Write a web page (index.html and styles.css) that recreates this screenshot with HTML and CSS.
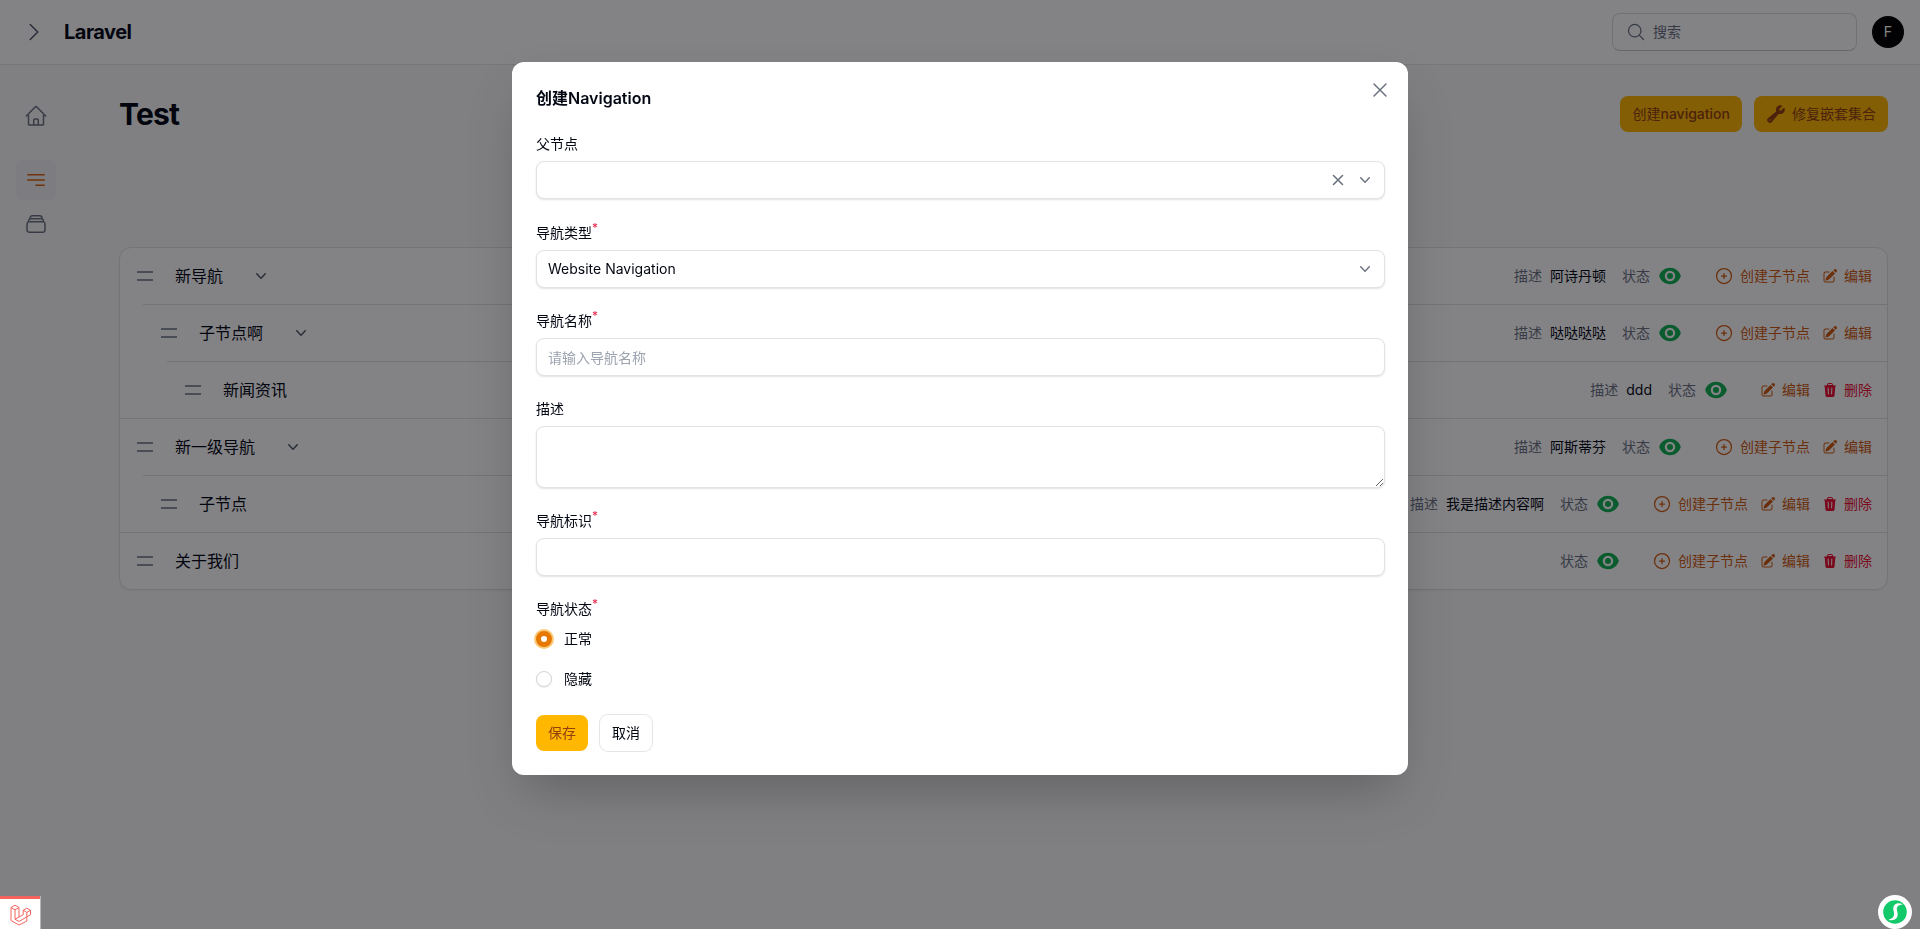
FILE: index.html
```html
<!DOCTYPE html>
<html lang="zh-CN">
<head>
<meta charset="utf-8">
<title>Test - Laravel</title>
<link rel="stylesheet" href="styles.css">
</head>
<body>
<svg class="defs" width="0" height="0" aria-hidden="true">
  <symbol id="i-eye" viewBox="0 0 24 24"><path d="M12 15a3 3 0 1 0 0-6 3 3 0 0 0 0 6Z"/><path fill-rule="evenodd" clip-rule="evenodd" d="M1.323 11.447C2.811 6.976 7.028 3.75 12.001 3.75c4.97 0 9.185 3.223 10.675 7.69.12.362.12.752 0 1.113-1.487 4.471-5.705 7.697-10.677 7.697-4.97 0-9.186-3.223-10.675-7.69a1.762 1.762 0 0 1 0-1.113ZM17.25 12a5.25 5.25 0 1 1-10.5 0 5.25 5.25 0 0 1 10.5 0Z"/></symbol>
  <symbol id="i-plus" viewBox="0 0 24 24"><path fill="none" stroke="currentColor" stroke-width="1.5" stroke-linecap="round" stroke-linejoin="round" d="M12 9v6m3-3H9m12 0a9 9 0 1 1-18 0 9 9 0 0 1 18 0Z"/></symbol>
  <symbol id="i-edit" viewBox="0 0 24 24"><path d="M21.731 2.269a2.625 2.625 0 0 0-3.712 0l-1.157 1.157 3.712 3.712 1.157-1.157a2.625 2.625 0 0 0 0-3.712ZM19.513 8.199l-3.712-3.712-8.4 8.4a5.25 5.25 0 0 0-1.32 2.214l-.8 2.685a.75.75 0 0 0 .933.933l2.685-.8a5.25 5.25 0 0 0 2.214-1.32l8.4-8.4Z"/><path d="M5.25 5.25a3 3 0 0 0-3 3v10.5a3 3 0 0 0 3 3h10.5a3 3 0 0 0 3-3V13.5a.75.75 0 0 0-1.5 0v5.25a1.5 1.5 0 0 1-1.5 1.5H5.25a1.5 1.5 0 0 1-1.5-1.5V8.25a1.5 1.5 0 0 1 1.5-1.5h5.25a.75.75 0 0 0 0-1.5H5.25Z"/></symbol>
  <symbol id="i-trash" viewBox="0 0 24 24"><path fill-rule="evenodd" clip-rule="evenodd" d="M16.5 4.478v.227a48.816 48.816 0 0 1 3.878.512.75.75 0 1 1-.256 1.478l-.209-.035-1.005 13.07a3 3 0 0 1-2.991 2.77H8.084a3 3 0 0 1-2.991-2.77L4.087 6.66l-.209.035a.75.75 0 0 1-.256-1.478A48.567 48.567 0 0 1 7.5 4.705v-.227c0-1.564 1.213-2.9 2.816-2.951a52.662 52.662 0 0 1 3.369 0c1.603.051 2.815 1.387 2.815 2.951Zm-6.136-1.452a51.196 51.196 0 0 1 3.273 0C14.39 3.05 15 3.684 15 4.478v.113a49.488 49.488 0 0 0-6 0v-.113c0-.794.609-1.428 1.364-1.452Zm-.355 5.945a.75.75 0 1 0-1.5.058l.347 9a.75.75 0 1 0 1.499-.058l-.346-9Zm5.48.058a.75.75 0 1 0-1.498-.058l-.347 9a.75.75 0 0 0 1.5.058l.345-9Z"/></symbol>
  <symbol id="i-handle" viewBox="0 0 16 10"><path fill="none" stroke="currentColor" stroke-width="1.5" d="M0 1h16M0 9h16"/></symbol>
  <symbol id="i-down" viewBox="0 0 20 20"><path fill-rule="evenodd" clip-rule="evenodd" d="M5.23 7.21a.75.75 0 0 1 1.06.02L10 11.168l3.71-3.938a.75.75 0 1 1 1.08 1.04l-4.25 4.5a.75.75 0 0 1-1.08 0l-4.25-4.5a.75.75 0 0 1 .02-1.06Z"/></symbol>
  <symbol id="i-x" viewBox="0 0 24 24"><path fill="none" stroke="currentColor" stroke-width="1.5" stroke-linecap="round" stroke-linejoin="round" d="M6 18 18 6M6 6l12 12"/></symbol>
  <symbol id="i-x-bold" viewBox="0 0 20 20"><path fill="none" stroke="currentColor" stroke-width="1.6" stroke-linecap="round" d="M5.5 14.500l9-9M5.5 5.500l9 9"/></symbol>
</svg>

<header class="topbar">
  <svg class="topbar-toggle" viewBox="0 0 24 24"><path fill="none" stroke="currentColor" stroke-width="1.5" stroke-linecap="round" stroke-linejoin="round" d="m8.25 4.5 7.5 7.5-7.5 7.5"/></svg>
  <div class="brand">Laravel</div>
  <div class="topbar-right">
    <label class="search">
      <svg class="search-icon" viewBox="0 0 24 24"><path fill="none" stroke="currentColor" stroke-width="1.5" stroke-linecap="round" stroke-linejoin="round" d="m21 21-5.197-5.197m0 0A7.5 7.5 0 1 0 5.196 5.196a7.5 7.5 0 0 0 10.607 10.607Z"/></svg>
      <span class="search-text">搜索</span>
    </label>
    <div class="avatar">F</div>
  </div>
</header>

<div class="shell">
  <nav class="sidebar">
    <a class="nav-item nav-item-first"><svg viewBox="0 0 24 24"><path fill="none" stroke="currentColor" stroke-width="1.5" stroke-linecap="round" stroke-linejoin="round" d="m2.25 12 8.954-8.955c.44-.439 1.152-.439 1.591 0L21.75 12M4.5 9.75v10.125c0 .621.504 1.125 1.125 1.125H9.75v-4.875c0-.621.504-1.125 1.125-1.125h2.25c.621 0 1.125.504 1.125 1.125V21h4.125c.621 0 1.125-.504 1.125-1.125V9.75M8.25 21h8.25"/></svg></a>
    <a class="nav-item nav-item-active"><svg viewBox="0 0 24 24"><path fill="none" stroke="currentColor" stroke-width="1.5" stroke-linecap="round" stroke-linejoin="round" d="M3.75 6.75h16.5M3.75 12h16.5M12 17.25h8.25"/></svg></a>
    <a class="nav-item"><svg viewBox="0 0 24 24"><path fill="none" stroke="currentColor" stroke-width="1.5" stroke-linecap="round" stroke-linejoin="round" d="M6 6.878V6a2.25 2.25 0 0 1 2.25-2.25h7.5A2.25 2.25 0 0 1 18 6v.878m-12 0c.235-.083.487-.128.75-.128h10.5c.263 0 .515.045.75.128m-12 0A2.25 2.25 0 0 0 4.5 9v.878m13.5-3A2.25 2.25 0 0 1 19.5 9v.878m0 0a2.246 2.246 0 0 0-.75-.128H5.25c-.263 0-.515.045-.75.128m15 0A2.25 2.25 0 0 1 21 12v6a2.25 2.25 0 0 1-2.25 2.25H5.25A2.25 2.25 0 0 1 3 18v-6c0-.98.626-1.813 1.5-2.122"/></svg></a>
  </nav>

  <main class="main">
    <div class="page-head">
      <h1 class="page-title">Test</h1>
      <div class="page-actions">
        <button class="btn btn-primary"><span>创建<span class="btn-latin">navigation</span></span></button>
        <button class="btn btn-primary btn-icon"><svg viewBox="0 0 24 24" fill="currentColor"><path fill-rule="evenodd" clip-rule="evenodd" d="M12 6.75a5.25 5.25 0 0 1 6.775-5.025.75.75 0 0 1 .313 1.248l-3.32 3.319c.063.475.276.934.641 1.299.365.365.824.578 1.3.64l3.318-3.319a.75.75 0 0 1 1.248.313 5.25 5.25 0 0 1-5.472 6.756c-1.018-.086-1.87.1-2.309.634L7.344 21.3A3.298 3.298 0 1 1 2.7 16.657l8.684-7.151c.533-.44.72-1.291.634-2.309A5.342 5.342 0 0 1 12 6.75ZM4.117 19.125a.75.75 0 0 1 .75-.75h.008a.75.75 0 0 1 .75.75v.008a.75.75 0 0 1-.75.75h-.008a.75.75 0 0 1-.75-.75v-.008Z"/></svg>修复嵌套集合</button>
      </div>
    </div>

    <section class="tree">
      <div class="row">
        <div class="row-left"><svg class="handle"><use href="#i-handle"/></svg><span class="row-name">新导航</span><svg class="row-toggle"><use href="#i-down"/></svg></div>
        <div class="row-right">
          <span class="meta-label">描述</span><span class="meta-value">阿诗丹顿</span>
          <span class="meta-label meta-status">状态</span><svg class="eye"><use href="#i-eye"/></svg>
          <a class="act act-first"><svg class="act-plus"><use href="#i-plus"/></svg>创建子节点</a>
          <a class="act"><svg class="act-icon"><use href="#i-edit"/></svg>编辑</a>
        </div>
      </div>
      <div class="row row-l1">
        <div class="row-left"><svg class="handle"><use href="#i-handle"/></svg><span class="row-name">子节点啊</span><svg class="row-toggle"><use href="#i-down"/></svg></div>
        <div class="row-right">
          <span class="meta-label">描述</span><span class="meta-value">哒哒哒哒</span>
          <span class="meta-label meta-status">状态</span><svg class="eye"><use href="#i-eye"/></svg>
          <a class="act act-first"><svg class="act-plus"><use href="#i-plus"/></svg>创建子节点</a>
          <a class="act"><svg class="act-icon"><use href="#i-edit"/></svg>编辑</a>
        </div>
      </div>
      <div class="row row-l2">
        <div class="row-left"><svg class="handle"><use href="#i-handle"/></svg><span class="row-name">新闻资讯</span></div>
        <div class="row-right">
          <span class="meta-label">描述</span><span class="meta-value">ddd</span>
          <span class="meta-label meta-status">状态</span><svg class="eye"><use href="#i-eye"/></svg>
          <a class="act act-first"><svg class="act-icon"><use href="#i-edit"/></svg>编辑</a>
          <a class="act act-danger"><svg class="act-icon"><use href="#i-trash"/></svg>删除</a>
        </div>
      </div>
      <div class="row">
        <div class="row-left"><svg class="handle"><use href="#i-handle"/></svg><span class="row-name">新一级导航</span><svg class="row-toggle"><use href="#i-down"/></svg></div>
        <div class="row-right">
          <span class="meta-label">描述</span><span class="meta-value">阿斯蒂芬</span>
          <span class="meta-label meta-status">状态</span><svg class="eye"><use href="#i-eye"/></svg>
          <a class="act act-first"><svg class="act-plus"><use href="#i-plus"/></svg>创建子节点</a>
          <a class="act"><svg class="act-icon"><use href="#i-edit"/></svg>编辑</a>
        </div>
      </div>
      <div class="row row-l1">
        <div class="row-left"><svg class="handle"><use href="#i-handle"/></svg><span class="row-name">子节点</span></div>
        <div class="row-right">
          <span class="meta-label">描述</span><span class="meta-value">我是描述内容啊</span>
          <span class="meta-label meta-status">状态</span><svg class="eye"><use href="#i-eye"/></svg>
          <a class="act act-first"><svg class="act-plus"><use href="#i-plus"/></svg>创建子节点</a>
          <a class="act"><svg class="act-icon"><use href="#i-edit"/></svg>编辑</a>
          <a class="act act-danger"><svg class="act-icon"><use href="#i-trash"/></svg>删除</a>
        </div>
      </div>
      <div class="row">
        <div class="row-left"><svg class="handle"><use href="#i-handle"/></svg><span class="row-name">关于我们</span></div>
        <div class="row-right">
          <span class="meta-label meta-status">状态</span><svg class="eye"><use href="#i-eye"/></svg>
          <a class="act act-first"><svg class="act-plus"><use href="#i-plus"/></svg>创建子节点</a>
          <a class="act"><svg class="act-icon"><use href="#i-edit"/></svg>编辑</a>
          <a class="act act-danger"><svg class="act-icon"><use href="#i-trash"/></svg>删除</a>
        </div>
      </div>
    </section>
  </main>
</div>

<div class="overlay">
  <div class="modal">
    <svg class="modal-close"><use href="#i-x"/></svg>
    <h2 class="modal-title">创建Navigation</h2>
    <form class="form">
      <div class="field field-parent">
        <div class="label">父节点</div>
        <div class="box box-select">
          <span class="box-value"></span>
          <svg class="select-clear"><use href="#i-x-bold"/></svg>
          <svg class="select-chevron"><use href="#i-down"/></svg>
        </div>
      </div>
      <div class="field">
        <div class="label">导航类型<sup class="req">*</sup></div>
        <div class="box box-select">
          <span class="box-value">Website Navigation</span>
          <svg class="select-chevron"><use href="#i-down"/></svg>
        </div>
      </div>
      <div class="field">
        <div class="label">导航名称<sup class="req">*</sup></div>
        <input class="box box-input" type="text" placeholder="请输入导航名称">
      </div>
      <div class="field">
        <div class="label">描述</div>
        <textarea class="box box-textarea"></textarea>
      </div>
      <div class="field">
        <div class="label">导航标识<sup class="req">*</sup></div>
        <input class="box box-input" type="text">
      </div>
      <div class="field">
        <div class="label">导航状态<sup class="req">*</sup></div>
        <div class="radios">
          <div class="radio-row"><span class="radio radio-on"></span>正常</div>
          <div class="radio-row"><span class="radio"></span>隐藏</div>
        </div>
      </div>
      <div class="modal-actions">
        <button type="button" class="btn btn-save">保存</button>
        <button type="button" class="btn btn-cancel">取消</button>
      </div>
    </form>
  </div>
</div>

<div class="debugbar-tab">
  <svg viewBox="0 0 24 24"><path fill="none" stroke="currentColor" stroke-width="1" stroke-linejoin="round" d="M3 5.5 7 3.2l4 2.3v9.6l4.2-2.4V8.3l3.6-2.1 3.7 2.1v4.4l-3.7 2.1v4.3L11 23l-8-4.5V5.5ZM3 5.5l4 2.3 4-2.3M7 7.8v9.4l4 2.3 7.8-4.7M11 15.1l-4 2.1M15.2 8.3l3.6 2.1 3.7-2.1M18.8 10.4v4.4"/></svg>
</div>
<div class="float-logo">
  <svg viewBox="0 0 34 34"><circle cx="17" cy="17" r="17" fill="#fff"/><circle cx="17" cy="17" r="11.8" fill="#14c96a"/><path fill="#fff" d="M25 9.5c-3.8-2.2-8.6-1.6-9.6 2.6-.6 2.8.8 4.5.7 7-.1 2.8-2 5-5.6 5.6 5 1.6 9.3-.6 9.2-5.4 0-2.6-1.3-4.3-.8-6.600.5-2 2.800-3 6.100-3.200Z"/></svg>
</div>
</body>
</html>
```

FILE: styles.css
```css
* { box-sizing: border-box; }

html, body { height: 100%; }

body {
  margin: 0;
  background: #fafafa;
  color: #030712;
  font-family: Inter, "Noto Sans CJK SC", sans-serif;
  font-size: 14px;
  line-height: 20px;
  overflow: hidden;
}

.defs { position: absolute; }

/* Topbar */
.topbar {
  height: 65px;
  display: flex;
  align-items: center;
  padding: 0 16px 0 22px;
  background: #fff;
  border-bottom: 1px solid #e7e7e8;
}

.topbar-toggle { width: 24px; height: 24px; color: #4b5563; }

.brand {
  margin-left: 18px;
  font-size: 20px;
  font-weight: 700;
  line-height: 24px;
  letter-spacing: -.5px;
}

.topbar-right {
  margin-left: auto;
  display: flex;
  align-items: center;
  gap: 15px;
}

.search {
  width: 245px;
  height: 38px;
  display: flex;
  align-items: center;
  gap: 7px;
  padding: 0 13px;
  background: #fff;
  border: 1px solid #dcdcdd;
  border-bottom-color: #c8c8ca;
  border-radius: 8px;
}

.search-icon { width: 20px; height: 20px; color: #6b7280; flex: none; }
.search-text { color: #6b7280; }

.avatar {
  width: 32px;
  height: 32px;
  border-radius: 50%;
  background: #000;
  color: #fff;
  display: flex;
  align-items: center;
  justify-content: center;
  font-size: 14px;
}

/* Shell */
.shell { display: flex; }

.sidebar {
  width: 87px;
  flex: none;
  padding: 31px 0 0 16px;
  display: flex;
  flex-direction: column;
  gap: 4px;
}

.nav-item {
  width: 40px;
  height: 40px;
  display: flex;
  align-items: center;
  justify-content: center;
  border-radius: 8px;
  color: #6b7280;
}

.nav-item svg { width: 24px; height: 24px; }
.nav-item-first { margin-bottom: 20px; }
.nav-item-active { background: #f3f4f6; color: #d9620c; }

.main {
  flex: 1;
  min-width: 0;
  padding: 31px 32px 0;
}

.page-head {
  display: flex;
  align-items: center;
  justify-content: space-between;
  height: 36px;
}

.page-title {
  margin: 0;
  font-size: 30px;
  font-weight: 700;
  line-height: 36px;
  letter-spacing: -.75px;
}

.page-actions { display: flex; gap: 12px; }

.btn {
  height: 36px;
  padding: 0 12px;
  display: inline-flex;
  align-items: center;
  gap: 6px;
  border: 0;
  border-radius: 8px;
  font: inherit;
  font-weight: 400;
}

.btn svg { width: 20px; height: 20px; }
.btn-latin { font-weight: 500; }
.btn-primary, .btn-save { background: #ffb700; color: #92400e; }

/* Tree */
.tree {
  margin-top: 115px;
  background: #fff;
  border: 1px solid #e2e2e4;
  border-radius: 12px;
  box-shadow: 0 1px 2px rgba(0, 0, 0, .05);
  overflow: hidden;
}

.row {
  height: 57px;
  display: flex;
  align-items: center;
  justify-content: space-between;
  padding: 0 15px 0 17px;
  border-top: 1px solid #e2e2e4;
}

.row:first-child { height: 56px; border-top: 0; }
.row-l1 { margin-left: 23px; padding-left: 18px; }
.row-l2 { margin-left: 47px; padding-left: 18px; }

.row-left { display: flex; align-items: center; }

.handle { width: 16px; height: 10px; color: #6b7280; flex: none; }

.row-name {
  margin-left: 22px;
  font-size: 16px;
  line-height: 24px;
}

.row-toggle {
  width: 20px;
  height: 20px;
  margin-left: 28px;
  fill: #4b5563;
}

.row-right { display: flex; align-items: center; }

.meta-label { color: #6b7280; }
.meta-value { margin-left: 8px; color: #030712; }
.meta-status { margin-left: 16px; }
.meta-status:first-child { margin-left: 0; }

.eye {
  width: 24px;
  height: 24px;
  margin-left: 8px;
  fill: #10b050;
}

.act {
  display: inline-flex;
  align-items: center;
  gap: 6px;
  margin-left: 12px;
  color: #d05a0c;
}

.act-first { margin-left: 32px; }
.act-danger { color: #ee0f30; }
.act-plus { width: 20px; height: 20px; }
.act-icon { width: 16px; height: 16px; fill: currentColor; }

/* Overlay and modal */
.overlay {
  position: fixed;
  inset: 0;
  display: flex;
  justify-content: center;
  align-items: flex-start;
  padding-top: 62px;
  background: rgba(5, 5, 10, .495);
}

.modal {
  position: relative;
  width: 896px;
  padding: 24px 23px 24px 24px;
  background: #fff;
  border-radius: 12px;
  box-shadow: 0 25px 50px -12px rgba(0, 0, 0, .25);
}

.modal-close {
  position: absolute;
  top: 16px;
  right: 16px;
  width: 24px;
  height: 24px;
  color: #6b7280;
}

.modal-title {
  margin: 0;
  font-size: 16px;
  font-weight: 600;
  line-height: 24px;
}

.form {
  margin-top: 24px;
  display: flex;
  flex-direction: column;
  gap: 23px;
}

.field-parent { margin-bottom: 1px; }

.label {
  margin-bottom: 7px;
  font-size: 14px;
  line-height: 20px;
}

.req {
  color: #e11d48;
  font-size: 12px;
  line-height: 0;
}

.box {
  display: flex;
  align-items: center;
  width: 100%;
  height: 38px;
  padding: 0 9px 0 11px;
  background: #fff;
  border: 1px solid #e3e3e5;
  border-radius: 8px;
  box-shadow: 0 1px 2px rgba(0, 0, 0, .12);
  font: inherit;
  color: #030712;
  outline: 0;
}

.box-value { flex: 1; min-width: 0; }
.box-input::placeholder { color: #9ca3af; }

.box-textarea {
  display: block;
  height: 62px;
  padding: 6px 11px;
  resize: vertical;
}

.select-clear { width: 20px; height: 20px; color: #6b7280; margin-right: 7px; }
.select-chevron { width: 20px; height: 20px; fill: #6b7280; }

.radios {
  display: flex;
  flex-direction: column;
  gap: 24px;
  padding-top: 5px;
}

.radio-row {
  display: flex;
  align-items: center;
  gap: 12px;
  height: 16px;
}

.radio {
  width: 16px;
  height: 16px;
  border-radius: 50%;
  border: 1px solid #d4d4d8;
  background: #fff;
  box-shadow: 0 1px 2px rgba(0, 0, 0, .08);
}

.radio-on {
  border: 5px solid #e67700;
  box-shadow: 0 0 0 2px #fbc97a;
}

.modal-actions { display: flex; gap: 12px; margin-top: 5px; }
.btn-cancel { background: #fff; box-shadow: 0 0 0 1px #e5e5e7; color: #030712; }

/* Corner widgets */
.debugbar-tab {
  position: fixed;
  left: 0;
  bottom: 0;
  width: 40px;
  height: 33px;
  display: flex;
  align-items: center;
  justify-content: center;
  background: #fff;
  border-top: 3px solid #f4645f;
  color: #f4645f;
  box-shadow: 1px 0 0 #b5b5b5;
}

.debugbar-tab svg { width: 24px; height: 24px; }

.float-logo {
  position: fixed;
  right: 8px;
  bottom: 0;
  width: 34px;
  height: 34px;
}

.float-logo svg { display: block; width: 34px; height: 34px; }
```
